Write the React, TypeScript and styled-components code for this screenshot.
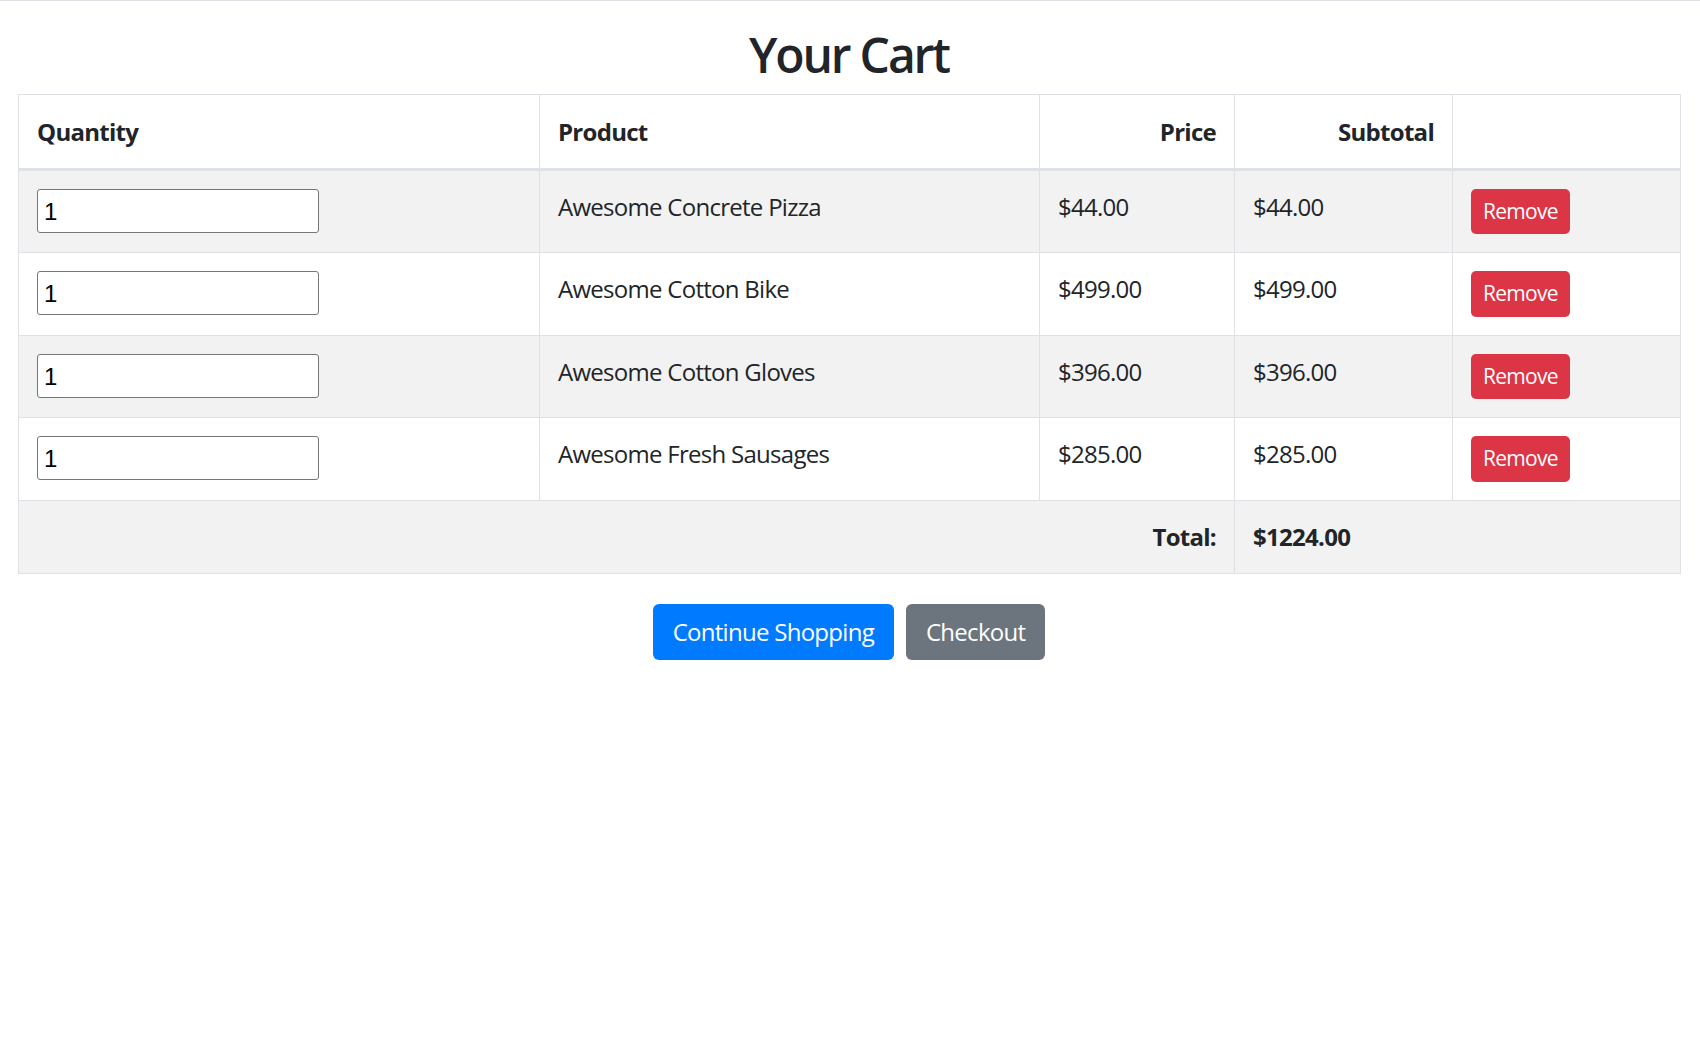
import React from "react";
import styled, { createGlobalStyle } from "styled-components";

const GlobalStyle = createGlobalStyle`
  html, body {
    margin: 0;
    padding: 0;
    background: #fff;
  }
  body {
    font-family: "Open Sans", "Noto Sans", sans-serif;
    font-size: 24px;
    line-height: 1.5;
    color: #212529;
    letter-spacing: -0.03em;
  }
  * { box-sizing: border-box; }
`;

const TopRule = styled.div`
  height: 1px;
  background: #dee2e6;
`;

const Page = styled.main`
  padding: 0 20px 0 18px;
`;

const Title = styled.h2`
  margin: 25px 0 10px;
  font-size: 48px;
  font-weight: 600;
  line-height: 57.6px;
  letter-spacing: -0.045em;
  text-align: center;
`;

const Table = styled.table`
  width: 100%;
  table-layout: fixed;
  border-collapse: collapse;
  border: 1px solid #dee2e6;
  margin-bottom: 30px;
`;

const HeadCell = styled.th<{ $align?: "left" | "right" }>`
  padding: 18px;
  border: 1px solid #dee2e6;
  border-bottom: 3px solid #dee2e6;
  text-align: ${(p) => p.$align ?? "left"};
  vertical-align: bottom;
  font-weight: 700;
  height: 75px;
`;

const Row = styled.tr<{ $striped?: boolean }>`
  background: ${(p) => (p.$striped ? "#f2f2f2" : "#fff")};
`;

const Cell = styled.td<{ $align?: "left" | "right"; $bold?: boolean }>`
  padding: 18px;
  border: 1px solid #dee2e6;
  vertical-align: top;
  text-align: ${(p) => p.$align ?? "left"};
  font-weight: ${(p) => (p.$bold ? 700 : 400)};
`;

const QtyInput = styled.input`
  display: block;
  width: 282px;
  height: 44px;
  margin: 0;
  padding: 2px 6px 0;
  border: 1px solid #767676;
  border-radius: 3px;
  background: #fff;
  font-family: "Liberation Sans", Arial, sans-serif;
  font-size: 24px;
  letter-spacing: 0;
  color: #000;
  outline: none;
`;

const Button = styled.button<{ $variant: "primary" | "secondary" | "danger"; $small?: boolean }>`
  display: inline-block;
  font-family: inherit;
  letter-spacing: inherit;
  font-weight: 400;
  color: #fff;
  border: 1.5px solid transparent;
  cursor: pointer;
  background: ${(p) =>
    p.$variant === "primary" ? "#007bff" : p.$variant === "secondary" ? "#6c757d" : "#dc3545"};
  font-size: ${(p) => (p.$small ? "21px" : "24px")};
  line-height: 1.5;
  padding: ${(p) => (p.$small ? "6px 11px" : "9px 19px")};
  border-radius: ${(p) => (p.$small ? "5px" : "6px")};
`;

const Actions = styled.div`
  display: flex;
  justify-content: center;
  gap: 12px;
`;

const items = [
  { name: "Awesome Concrete Pizza", price: 44 },
  { name: "Awesome Cotton Bike", price: 499 },
  { name: "Awesome Cotton Gloves", price: 396 },
  { name: "Awesome Fresh Sausages", price: 285 },
];

const money = (n: number) => `$${n.toFixed(2)}`;

export default function App() {
  const total = items.reduce((s, i) => s + i.price, 0);
  return (
    <>
      <GlobalStyle />
      <TopRule />
      <Page>
        <Title>Your Cart</Title>
        <Table>
          <colgroup>
            <col style={{ width: 521 }} />
            <col style={{ width: 500 }} />
            <col style={{ width: 195 }} />
            <col style={{ width: 218 }} />
            <col style={{ width: 228 }} />
          </colgroup>
          <thead>
            <tr>
              <HeadCell>Quantity</HeadCell>
              <HeadCell>Product</HeadCell>
              <HeadCell $align="right">Price</HeadCell>
              <HeadCell $align="right">Subtotal</HeadCell>
              <HeadCell />
            </tr>
          </thead>
          <tbody>
            {items.map((item, i) => (
              <Row key={item.name} $striped={i % 2 === 0}>
                <Cell>
                  <QtyInput type="text" defaultValue="1" />
                </Cell>
                <Cell>{item.name}</Cell>
                <Cell>{money(item.price)}</Cell>
                <Cell>{money(item.price)}</Cell>
                <Cell>
                  <Button $variant="danger" $small>
                    Remove
                  </Button>
                </Cell>
              </Row>
            ))}
            <Row $striped>
              <Cell colSpan={3} $align="right" $bold>
                Total:
              </Cell>
              <Cell colSpan={2} $bold>
                {money(total)}
              </Cell>
            </Row>
          </tbody>
        </Table>
        <Actions>
          <Button $variant="primary">Continue Shopping</Button>
          <Button $variant="secondary">Checkout</Button>
        </Actions>
      </Page>
    </>
  );
}
